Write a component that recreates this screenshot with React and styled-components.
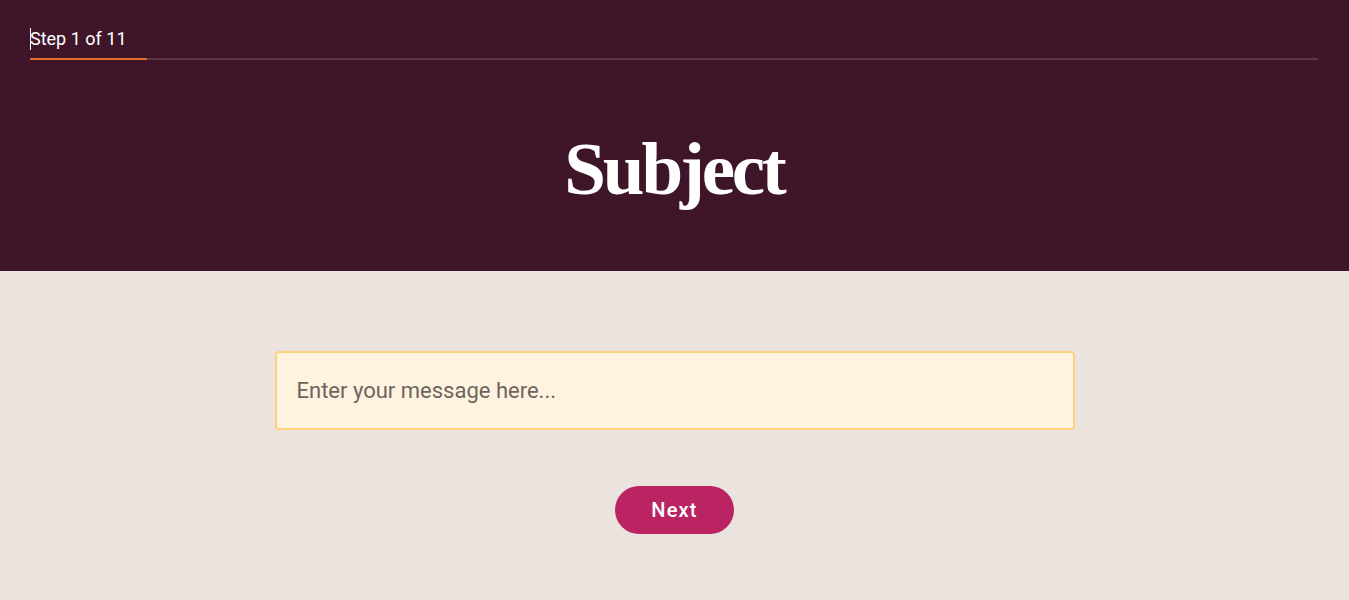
import styled, { createGlobalStyle } from "styled-components";

const GlobalStyle = createGlobalStyle`
  html, body {
    margin: 0;
    padding: 0;
    background: #ebe3de;
    font-family: Roboto, "Liberation Sans", sans-serif;
  }
`;

const Page = styled.div`
  min-height: 600px;
  background: #ebe3de;
`;

const Header = styled.header`
  height: 271px;
  box-sizing: border-box;
  background: #3f1629;
  padding: 25px 31px 0 30px;
`;

const StepLabel = styled.div`
  position: relative;
  font-size: 18px;
  line-height: 28px;
  color: #fff;
`;

const Caret = styled.span`
  position: absolute;
  left: 0;
  top: 3px;
  width: 1px;
  height: 22px;
  background: #fff;
`;

const Track = styled.div`
  margin-top: 5px;
  height: 2px;
  background: #5b3647;
`;

const Fill = styled.div`
  height: 100%;
  background: #e0702a;
`;

const Title = styled.h1`
  margin: 64px 0 0;
  text-align: center;
  font-family: "Liberation Serif", "DejaVu Serif", serif;
  font-weight: 700;
  font-size: 75px;
  line-height: 90px;
  letter-spacing: -3.2px;
  color: #fff;
`;

const Main = styled.main`
  display: flex;
  flex-direction: column;
  align-items: center;
  padding-top: 80px;
`;

const MessageInput = styled.input`
  width: 800px;
  height: 79px;
  box-sizing: border-box;
  border: 2px solid #fdd27c;
  border-radius: 4px;
  background: #fff2df;
  padding: 0 20px;
  font-family: Roboto, "Liberation Sans", sans-serif;
  font-size: 22px;
  color: #333;
  outline: none;

  &::placeholder {
    color: #6b6560;
  }
`;

const NextButton = styled.button`
  margin-top: 56px;
  width: 119px;
  height: 48px;
  border: none;
  border-radius: 24px;
  background: #bb2463;
  color: #fff;
  font-family: Roboto, "Liberation Sans", sans-serif;
  font-weight: 500;
  font-size: 20px;
  letter-spacing: 1.2px;
  cursor: pointer;
`;

const steps = 11;
const current = 1;

export default function App() {
  return (
    <Page>
      <GlobalStyle />
      <Header>
        <StepLabel>
          <Caret />
          Step {current} of {steps}
        </StepLabel>
        <Track>
          <Fill style={{ width: `${(current / steps) * 100}%` }} />
        </Track>
        <Title>Subject</Title>
      </Header>
      <Main>
        <MessageInput placeholder="Enter your message here..." />
        <NextButton>Next</NextButton>
      </Main>
    </Page>
  );
}
